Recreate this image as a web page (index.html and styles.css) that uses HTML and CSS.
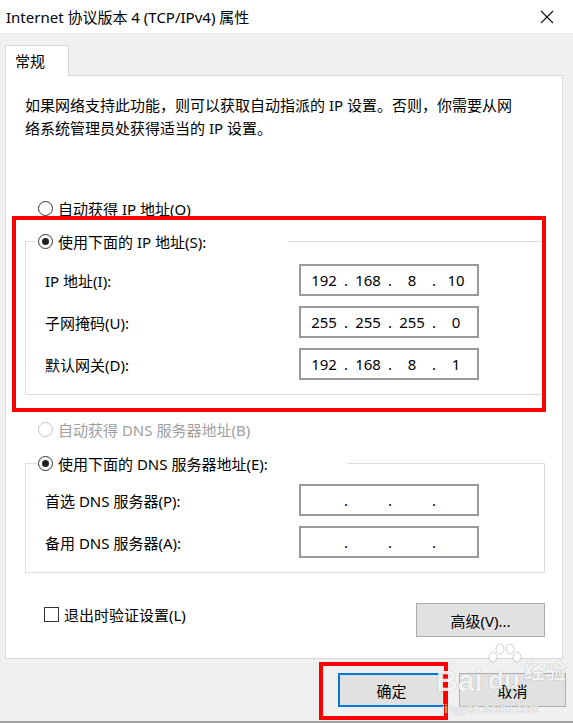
FILE: index.html
```html
<!DOCTYPE html>
<html lang="zh">
<head>
    <meta charset="UTF-8">
    <meta name="viewport" content="width=device-width, initial-scale=1.0">
    <title>Internet 协议版本 4 (TCP/IPv4) 属性</title>
    <link rel="stylesheet" href="styles.css">
</head>
<body>
    <div class="window">
        <div class="titlebar">
            <span class="title">Internet 协议版本 4 (TCP/IPv4) 属性</span>
            <span class="close">
                <svg width="14" height="14" viewBox="0 0 14 14"><path d="M1 1 L13 13 M13 1 L1 13" stroke="#111" stroke-width="1.1" fill="none"/></svg>
            </span>
        </div>

        <div class="body">
            <div class="tabs">
                <div class="tab">常规</div>
            </div>

            <div class="panel">
                <p class="desc">如果网络支持此功能，则可以获取自动指派的 IP 设置。否则，你需要从网<br>络系统管理员处获得适当的 IP 设置。</p>

                <label class="radio first"><span class="dot"></span>自动获得 IP 地址(O)</label>

                <fieldset class="group">
                    <legend class="legend-ip"><label class="radio"><span class="dot checked"></span>使用下面的 IP 地址(S):</label></legend>
                    <div class="rows rows-ip">
                        <div class="row">
                            <span class="label">IP 地址(I):</span>
                            <div class="ip"><span>192</span><i>.</i><span>168</span><i>.</i><span>8</span><i>.</i><span>10</span></div>
                        </div>
                        <div class="row">
                            <span class="label">子网掩码(U):</span>
                            <div class="ip"><span>255</span><i>.</i><span>255</span><i>.</i><span>255</span><i>.</i><span>0</span></div>
                        </div>
                        <div class="row">
                            <span class="label">默认网关(D):</span>
                            <div class="ip"><span>192</span><i>.</i><span>168</span><i>.</i><span>8</span><i>.</i><span>1</span></div>
                        </div>
                    </div>
                </fieldset>

                <label class="radio disabled"><span class="dot"></span>自动获得 DNS 服务器地址(B)</label>

                <fieldset class="group group-dns">
                    <legend class="legend-dns"><label class="radio"><span class="dot checked"></span>使用下面的 DNS 服务器地址(E):</label></legend>
                    <div class="rows rows-dns">
                        <div class="row">
                            <span class="label">首选 DNS 服务器(P):</span>
                            <div class="ip"><span></span><i>.</i><span></span><i>.</i><span></span><i>.</i><span></span></div>
                        </div>
                        <div class="row">
                            <span class="label">备用 DNS 服务器(A):</span>
                            <div class="ip"><span></span><i>.</i><span></span><i>.</i><span></span><i>.</i><span></span></div>
                        </div>
                    </div>
                </fieldset>

                <div class="extras">
                    <label class="check"><span class="box"></span>退出时验证设置(L)</label>
                    <button class="btn btn-advanced">高级(V)...</button>
                </div>
            </div>

            <div class="footer">
                <button class="btn btn-ok">确定</button>
                <button class="btn">取消</button>
            </div>
        </div>

        <!-- 标注框 -->
        <div class="mark mark-ip"></div>
        <div class="mark mark-ok"></div>

        <!-- 水印 -->
        <div class="watermark">
            <span class="wm-bai">Bai</span>
            <span class="wm-paw">
                <svg width="34" height="20" viewBox="0 0 34 20">
                    <ellipse cx="5" cy="14" rx="4" ry="5"/>
                    <ellipse cx="12" cy="6" rx="4" ry="5"/>
                    <ellipse cx="22" cy="6" rx="4" ry="5"/>
                    <ellipse cx="29" cy="14" rx="4" ry="5"/>
                </svg>
                <span class="wm-du">du</span>
            </span>
            <span class="wm-jy">经验</span>
            <span class="wm-url">jingyan.baidu.com</span>
        </div>
    </div>
</body>
</html>
```

FILE: styles.css
```css
* {
    margin: 0;
    padding: 0;
    box-sizing: border-box;
}

body {
    font-family: "Noto Sans", "Noto Sans CJK SC", sans-serif;
    font-size: 15px;
    color: #000;
    background: #f0f0f0;
}

.window {
    position: relative;
    width: 573px;
    height: 723px;
    background: #f0f0f0;
    border-bottom: 2px solid #a3a3a3;
    overflow: hidden;
}

.titlebar {
    height: 33px;
    background: #fff;
    display: flex;
    align-items: center;
    justify-content: space-between;
    padding: 0 19px 0 6px;
}

.title {
    line-height: 20px;
}

.close {
    display: flex;
}

.body {
    padding: 12px 0 0 5px;
}

.tabs {
    display: flex;
}

.tab {
    position: relative;
    z-index: 1;
    width: 64px;
    height: 31px;
    margin-bottom: -1px;
    padding-left: 9px;
    line-height: 30px;
    background: #fff;
    border: 1px solid #d9d9d9;
    border-bottom: none;
}

.panel {
    width: 558px;
    height: 584px;
    background: #fff;
    border: 1px solid #d9d9d9;
    padding: 18px 17px 0 19px;
}

.desc {
    line-height: 23px;
}

/* 单选按钮 */
.radio {
    display: flex;
    align-items: center;
    gap: 5px;
    height: 20px;
    white-space: nowrap;
}

.panel > .radio {
    margin-left: 13px;
}

.radio.first {
    margin-top: 58px;
}

.dot {
    position: relative;
    width: 15px;
    height: 15px;
    border: 1px solid #333;
    border-radius: 50%;
    background: #fff;
    flex-shrink: 0;
}

.dot.checked::after {
    content: '';
    position: absolute;
    top: 3px;
    left: 3px;
    width: 7px;
    height: 7px;
    border-radius: 50%;
    background: #222;
}

.radio.disabled {
    margin-top: 24px;
    color: #a0a0a0;
}

.radio.disabled .dot {
    border-color: #c4c4c4;
}

/* 分组框 */
.group {
    border: 1px solid #dcdcdc;
    margin-top: 13px;
    padding: 0;
}

.group-dns {
    margin-top: 14px;
}

.group legend {
    margin-left: 11px;
    padding-left: 1px;
    background: #fff;
}

.legend-ip {
    width: 251px;
}

.legend-dns {
    width: 310px;
}

.rows {
    display: flex;
    flex-direction: column;
    gap: 10px;
    padding: 13px 0 14px 19px;
}

.rows-dns {
    padding-top: 11px;
}

.row {
    display: flex;
    align-items: center;
    height: 32px;
}

.label {
    width: 254px;
}

.ip {
    display: flex;
    width: 180px;
    height: 32px;
    padding-left: 5px;
    border: 2px solid #9a9a9a;
    background: #fff;
    line-height: 28px;
}

.ip span {
    width: 36px;
    text-align: center;
}

.ip i {
    width: 8px;
    font-style: normal;
    text-align: center;
}

/* 底部 */
.extras {
    display: flex;
    justify-content: space-between;
    align-items: flex-start;
    margin-top: 30px;
}

.check {
    display: flex;
    align-items: center;
    gap: 5px;
    height: 20px;
    margin: 1px 0 0 19px;
}

.box {
    width: 15px;
    height: 15px;
    border: 1px solid #333;
    background: #fff;
}

.btn {
    width: 107px;
    height: 34px;
    font-family: inherit;
    font-size: 15px;
    color: #000;
    background: #e1e1e1;
    border: 1px solid #adadad;
}

.btn-advanced {
    width: 129px;
}

.btn-ok {
    border: 2px solid #0078d7;
}

.footer {
    display: flex;
    justify-content: flex-end;
    gap: 14px;
    margin-top: 14px;
    padding-right: 7px;
}

/* 红色标注 */
.mark {
    position: absolute;
    border: 4px solid #ff0000;
    pointer-events: none;
}

.mark-ip {
    left: 12px;
    top: 216px;
    width: 534px;
    height: 196px;
}

.mark-ok {
    left: 319px;
    top: 662px;
    width: 129px;
    height: 58px;
}

/* 百度经验水印 */
.watermark {
    position: absolute;
    left: 436px;
    top: 640px;
    width: 137px;
    height: 80px;
    color: rgba(255, 255, 255, 0.9);
    font-family: "Liberation Sans", sans-serif;
    font-weight: bold;
    text-shadow: 0 0 1px rgba(0, 0, 0, 0.35);
    pointer-events: none;
}

.wm-bai {
    position: absolute;
    left: 0;
    top: 24px;
    font-size: 30px;
}

.wm-paw {
    position: absolute;
    left: 52px;
    top: 3px;
    width: 34px;
}

.wm-paw svg {
    display: block;
    fill: rgba(255, 255, 255, 0.9);
    stroke: rgba(0, 0, 0, 0.18);
}

.wm-du {
    display: block;
    font-size: 26px;
    line-height: 30px;
    margin-top: 2px;
}

.wm-jy {
    position: absolute;
    left: 88px;
    top: 14px;
    font-family: "Noto Sans CJK SC", sans-serif;
    font-size: 21px;
}

.wm-url {
    position: absolute;
    left: 6px;
    top: 62px;
    font-size: 12px;
    font-weight: normal;
}
```
